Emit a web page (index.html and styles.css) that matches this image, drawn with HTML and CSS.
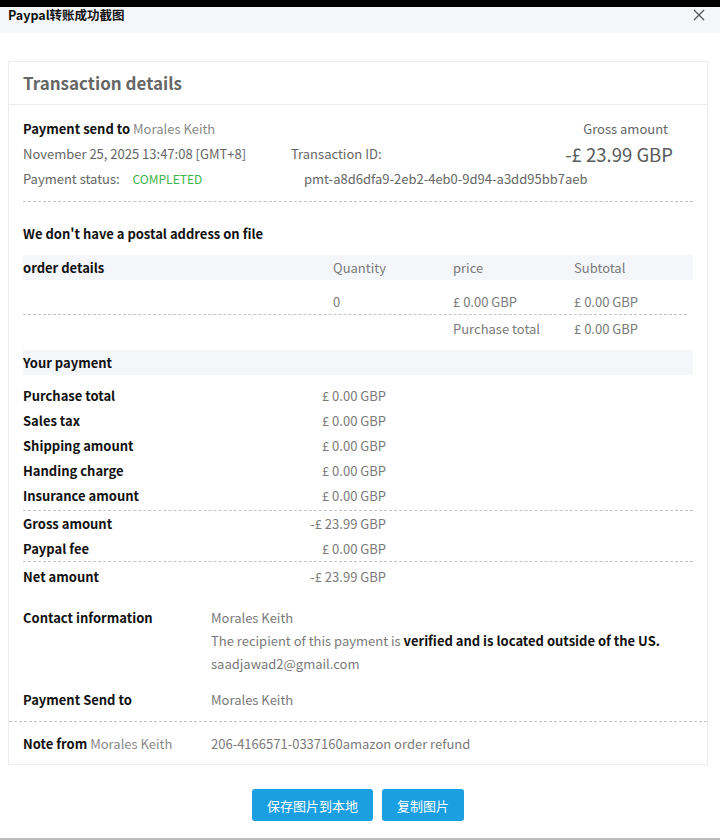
FILE: index.html
```html
<!DOCTYPE html>
<html lang="zh-CN">
<head>
<meta charset="utf-8">
<title>Paypal转账成功截图</title>
<link rel="stylesheet" href="styles.css">
</head>
<body>
<div class="topbar"></div>
<div class="header">
  <span class="header-title">Paypal转账成功截图</span>
  <svg class="close" width="12" height="12" viewBox="0 0 12 12"><path d="M1 1L11 11M11 1L1 11" stroke="#555" stroke-width="1.3" fill="none"/></svg>
</div>
<div class="main">
  <div class="card">
    <div class="card-title">Transaction details</div>
    <div class="card-body">
      <div class="summary">
        <div class="s-cell"><b class="lbl">Payment send to</b> <span class="light">Morales Keith</span></div>
        <div class="s-cell"></div>
        <div class="s-cell s-right gross-lbl">Gross amount</div>
        <div class="s-cell dim">November 25, 2025 13:47:08 [GMT+8]</div>
        <div class="s-cell dim">Transaction ID:</div>
        <div class="s-cell s-right gross-val">-£ 23.99 GBP</div>
        <div class="s-cell dim">Payment status: <span class="ok">COMPLETED</span></div>
        <div class="s-cell dim s-id">pmt-a8d6dfa9-2eb2-4eb0-9d94-a3dd95bb7aeb</div>
      </div>
      <div class="dash dash-summary"></div>
      <div class="postal">We don't have a postal address on file</div>
      <div class="band order-grid">
        <b class="lbl">order details</b><span class="muted">Quantity</span><span class="muted">price</span><span class="muted">Subtotal</span>
      </div>
      <div class="order-grid order-row">
        <span></span><span class="muted">0</span><span class="muted">£ 0.00 GBP</span><span class="muted">£ 0.00 GBP</span>
      </div>
      <div class="dash dash-short"></div>
      <div class="order-grid order-row2">
        <span></span><span></span><span class="muted">Purchase total</span><span class="muted">£ 0.00 GBP</span>
      </div>
      <div class="band"><b class="lbl">Your payment</b></div>
      <div class="pay pay-first">
        <div class="pay-row"><b class="lbl">Purchase total</b><span class="muted">£ 0.00 GBP</span></div>
        <div class="pay-row"><b class="lbl">Sales tax</b><span class="muted">£ 0.00 GBP</span></div>
        <div class="pay-row"><b class="lbl">Shipping amount</b><span class="muted">£ 0.00 GBP</span></div>
        <div class="pay-row"><b class="lbl">Handing charge</b><span class="muted">£ 0.00 GBP</span></div>
        <div class="pay-row"><b class="lbl">Insurance amount</b><span class="muted">£ 0.00 GBP</span></div>
      </div>
      <div class="dash"></div>
      <div class="pay">
        <div class="pay-row"><b class="lbl">Gross amount</b><span class="muted">-£ 23.99 GBP</span></div>
        <div class="pay-row"><b class="lbl">Paypal fee</b><span class="muted">£ 0.00 GBP</span></div>
      </div>
      <div class="dash"></div>
      <div class="pay">
        <div class="pay-row pay-net"><b class="lbl">Net amount</b><span class="muted">-£ 23.99 GBP</span></div>
      </div>
      <div class="info contact">
        <b class="lbl">Contact information</b>
        <div class="info-vals">
          <div class="muted">Morales Keith</div>
          <div class="muted">The recipient of this payment is <b class="strong">verified and is located outside of the US.</b></div>
          <div class="muted">saadjawad2@gmail.com</div>
        </div>
      </div>
      <div class="info sendto">
        <b class="lbl">Payment Send to</b>
        <div class="info-vals"><div class="muted">Morales Keith</div></div>
      </div>
    </div>
    <div class="dash"></div>
    <div class="info note">
      <div><b class="lbl">Note from</b> <span class="light">Morales Keith</span></div>
      <div class="muted">206-4166571-0337160amazon order refund</div>
    </div>
  </div>
  <div class="actions">
    <button class="btn">保存图片到本地</button>
    <button class="btn">复制图片</button>
  </div>
</div>
<div class="bottom-edge"></div>
</body>
</html>
```

FILE: styles.css
```css
* { box-sizing: border-box; }
html, body { margin: 0; padding: 0; }
body {
  width: 720px;
  height: 840px;
  overflow: hidden;
  background: #ffffff;
  font-family: "Noto Sans CJK SC", "Noto Sans", sans-serif;
  font-size: 13px;
  color: #222;
  display: flex;
  flex-direction: column;
}
body > * { flex-shrink: 0; }
.topbar { height: 7px; background: #000; }
.header {
  height: 26px;
  background: #f4f6fa;
  display: flex;
  align-items: center;
  justify-content: space-between;
  padding: 0 15px 11px 8px;
}
.header-title { font-size: 12.5px; font-weight: 700; color: #111; }
.close { display: block; }
.main { flex: 1 1 auto; padding: 28px 12px 0 8px; }
.card { width: 700px; border: 1px solid #ececec; }
.card-title {
  height: 43px;
  border-bottom: 1px solid #ececec;
  padding-left: 14px;
  padding-bottom: 1px;
  display: flex;
  align-items: center;
  font-size: 17px;
  font-weight: 700;
  color: #666;
}
.card-body { padding: 11px 14px 0 14px; }
.lbl { font-weight: 700; color: #111; }
.muted { color: #7a7a7a; }
.light { color: #8a8a8a; }
.dim { color: #666; }
.strong { font-weight: 700; color: #111; }
.ok { color: #3cb54a; margin-left: 10px; font-size: 12px; }
.summary {
  display: grid;
  grid-template-columns: 268px 1fr 150px;
  grid-auto-rows: 25px;
  align-items: center;
}
.s-right { text-align: right; padding-right: 20px; }
.gross-lbl { color: #666; padding-right: 25px; }
.gross-val { font-size: 18.5px; color: #5a5a5a; }
.s-id { grid-column: 2 / span 2; padding-left: 13px; }
.dash { border-top: 1px dashed #c4c4c4; }
.dash-summary { margin-top: 10px; }
.dash-short { margin-right: 6px; }
.postal { height: 25px; line-height: 25px; margin-top: 19px; font-weight: 700; color: #111; }
.band {
  background: #f5f6fa;
  height: 25px;
  margin-top: 9px;
  display: flex;
  align-items: center;
}
.order-grid {
  display: grid;
  grid-template-columns: 310px 120px 121px 1fr;
  align-items: center;
}
.order-row { height: 25px; margin-top: 9px; }
.order-row2 { height: 25px; margin-top: 1px; }
.pay-first { margin-top: 8px; margin-bottom: 2px; }
.pay-row {
  display: grid;
  grid-template-columns: 200px 163px;
  height: 25px;
  align-items: center;
}
.pay-row .muted { text-align: right; }
.pay-net { margin-top: 2px; }
.info { display: grid; grid-template-columns: 188px 1fr; }
.info-vals div { line-height: 23px; }
.contact { margin-top: 17px; }
.contact .lbl, .sendto .lbl { line-height: 23px; }
.sendto { margin-top: 13px; padding-bottom: 10px; }
.note { height: 42px; align-items: center; padding: 0 14px; }
.actions {
  display: flex;
  justify-content: center;
  gap: 9px;
  margin-top: 24px;
}
.btn {
  height: 32px;
  border: none;
  border-radius: 3px;
  background: #1a9fe3;
  color: #fff;
  font-family: "Noto Sans CJK SC", sans-serif;
  font-size: 13px;
  padding: 0 15px;
}
.bottom-edge { height: 2px; background: #bdbdbd; }
```
